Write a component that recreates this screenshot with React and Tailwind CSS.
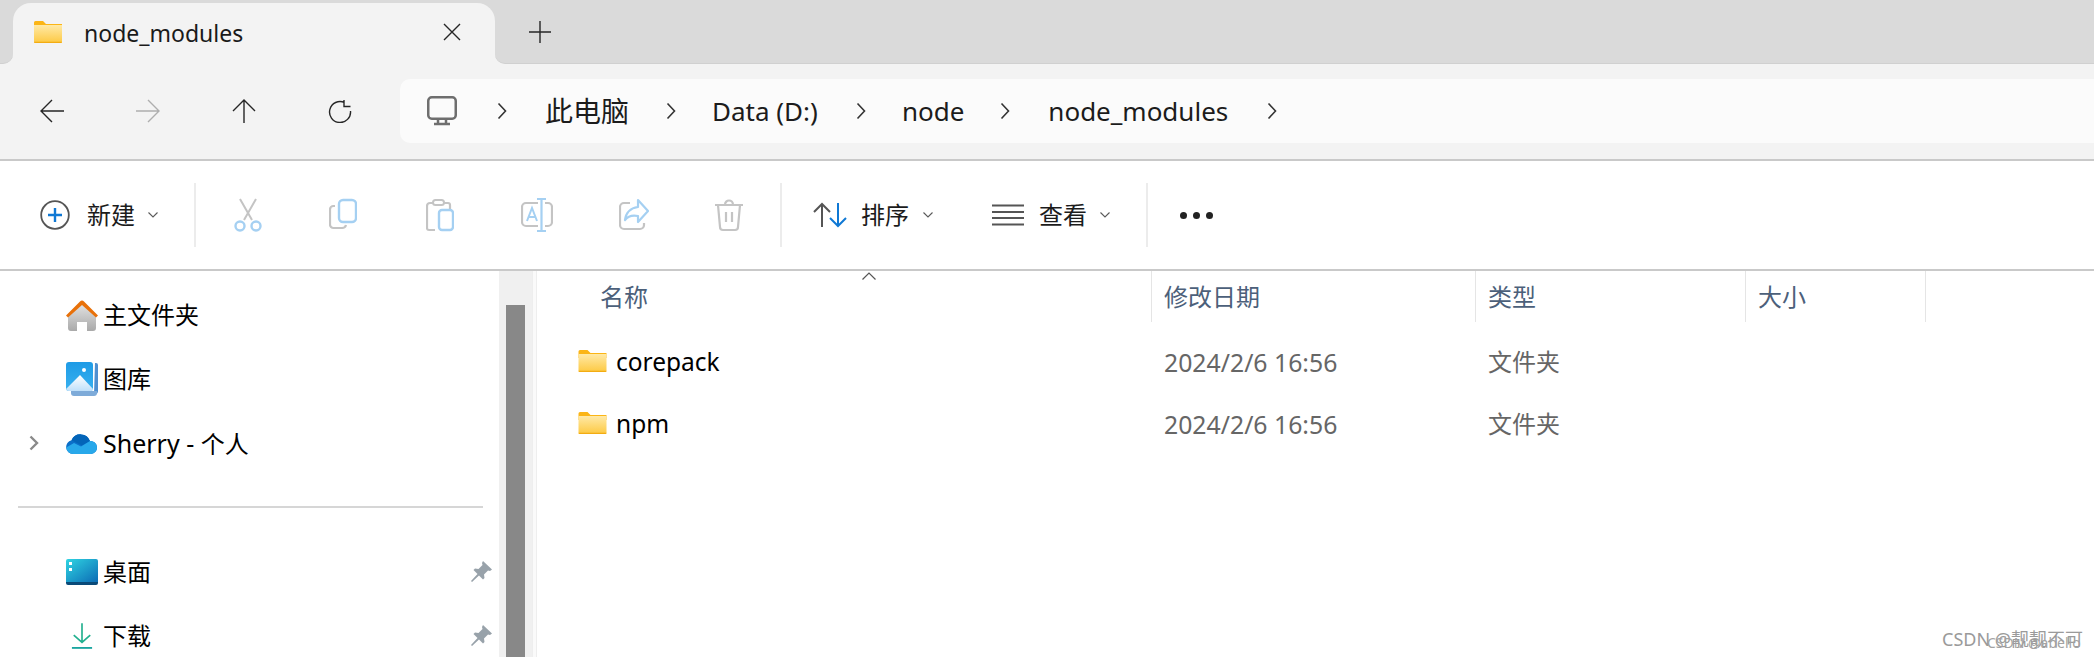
const FONT = "font-['Noto_Sans','Noto_Sans_CJK_SC',sans-serif]";

function FolderIcon({ className }) {
  return (
    <svg viewBox="0 0 28 22" className={className}>
      <defs>
        <linearGradient id="folderFill" x1="0" y1="0" x2="0" y2="1">
          <stop offset="0" stopColor="#ffe9a6" />
          <stop offset="1" stopColor="#fdc942" />
        </linearGradient>
      </defs>
      <path d="M0 1.5A1.5 1.5 0 0 1 1.5 0H9l3 3h16v5H0z" fill="#fbb516" />
      <path d="M0 4h28v16.5a1.5 1.5 0 0 1-1.5 1.5h-25A1.5 1.5 0 0 1 0 20.5z" fill="url(#folderFill)" />
      <path d="M0 20.8h28v.2a1 1 0 0 1-1 1H1a1 1 0 0 1-1-1z" fill="#f3ac12" />
    </svg>
  );
}

function NavIcon({ d, color = "#262626" }) {
  return (
    <svg viewBox="0 0 24 24" fill="none" stroke={color} strokeWidth="1.4" className="h-6 w-6">
      <path d={d} />
    </svg>
  );
}

function Chevron({ className = "" }) {
  return (
    <svg viewBox="0 0 10 18" fill="none" stroke="#333" strokeWidth="1.6" className={`h-[18px] w-[10px] shrink-0 ${className}`}>
      <path d="M1.5 1.5 8.5 9l-7 7.500" />
    </svg>
  );
}

function Caret() {
  return (
    <svg viewBox="0 0 10 6" fill="none" stroke="#5a5a5a" strokeWidth="1.1" className="h-[6px] w-[10px]">
      <path d="M.5.5 5 5 9.500.5" />
    </svg>
  );
}

function Divider() {
  return <div className="h-[64px] w-[2px] shrink-0 bg-[#ececec]" />;
}

const GRAY = "#c4c4c4";
const BLUE = "#a5d0f2";

function GhostIcon({ w, children }) {
  return (
    <svg viewBox={`0 0 ${w} 34`} fill="none" strokeWidth="2" style={{ width: w }} className="h-[34px] shrink-0">
      {children}
    </svg>
  );
}

function Pin() {
  return (
    <svg viewBox="0 0 22 22" className="h-[22px] w-[22px]" fill="#98a2aa">
      <path d="M13 0l9 8.500-2 1.500-2-.5-4 4 .5 3.500-1.500 1.500-4-4-7 6.500-1-1 6.500-7-4-4L5 7.500l3.500.5 4-4L12 2z" />
    </svg>
  );
}

function NavRow({ icon, label, chevron, pin }) {
  return (
    <div className="flex h-[64px] items-center">
      <div className="flex w-[66px] shrink-0 justify-start pl-[29px]">
        {chevron && (
          <svg viewBox="0 0 10 16" fill="none" stroke="#8a8a8a" strokeWidth="2.4" className="h-[16px] w-[10px]">
            <path d="M1.500 1.500 8 8l-6.500 6.500" />
          </svg>
        )}
      </div>
      <div className="flex w-[32px] shrink-0 items-center justify-center">{icon}</div>
      <span className="ml-[5px] text-[24px] leading-none text-black">{label}</span>
      {pin && <div className="ml-auto mr-[7px]"><Pin /></div>}
    </div>
  );
}

const COLS = "grid grid-cols-[615px_324px_270px_180px]";

function FileRow({ name }) {
  return (
    <div className={`${COLS} h-[62px] items-center`}>
      <div className="flex items-center pl-[41px]">
        <FolderIcon className="mb-[2px] h-[22px] w-[29px] shrink-0" />
        <span className="ml-[9px] text-[24.500px] leading-none text-black">{name}</span>
      </div>
      <span className="pl-[12px] text-[24.800px] leading-none text-[#666]">2024/2/6 16:56</span>
      <span className="pl-[12px] text-[24px] leading-none text-[#666]">文件夹</span>
      <span />
    </div>
  );
}

function HeaderCell({ children, className = "" }) {
  return (
    <div className={`flex h-[51px] items-center border-r border-[#e5e5e5] pl-[12px] text-[24px] leading-none text-[#4c607a] ${className}`}>
      {children}
    </div>
  );
}

export default function App() {
  return (
    <div className={`relative flex h-[657px] w-[2094px] flex-col overflow-hidden bg-white ${FONT}`}>
      {/* tab strip */}
      <div className="flex h-[64px] shrink-0 bg-[#f3f3f3]">
        <div className="w-[13px] rounded-br-[10px] border-b border-[#d0d0d0] bg-[#dadada]" />
        <div className="w-[482px] bg-[#dadada] pt-[3px]">
          <div className="flex h-full items-center rounded-t-[18px] bg-[#f3f3f3] pl-[21px] pr-[33px]">
            <FolderIcon className="mb-[4px] h-[22px] w-[28px] shrink-0" />
            <span className="ml-[22px] text-[23px] leading-none text-[#1a1a1a]">node_modules</span>
            <svg viewBox="0 0 20 20" fill="none" stroke="#262626" strokeWidth="1.4" className="mb-[4px] ml-auto h-[20px] w-[20px]">
              <path d="M2 2l16 16M18 2 2 18" />
            </svg>
          </div>
        </div>
        <div className="flex flex-1 items-center rounded-bl-[10px] border-b border-[#d0d0d0] bg-[#dadada] pl-[34px]">
          <svg viewBox="0 0 22 22" fill="none" stroke="#262626" strokeWidth="1.4" className="h-[22px] w-[22px]">
            <path d="M11 0v22M0 11h22" />
          </svg>
        </div>
      </div>

      {/* nav + address bar */}
      <div className="flex h-[97px] shrink-0 items-center border-b-2 border-[#c9c9c9] bg-[#f3f3f3] pb-[1px]">
        <div className="flex w-[400px] shrink-0 items-center gap-[72px] pl-[40px]">
          <NavIcon d="M24 12H1M12 1 1 12l11 11" />
          <NavIcon d="M0 12h23M12 1l11 11-11 11" color="#aeaeae" />
          <NavIcon d="M12 24V1M1 12 12 1l11 11" />
          <NavIcon d="M16.500 3.500A10.500 10.500 0 1 0 22.500 12M16 1v6.500h6.500" />
        </div>
        <div className="flex h-[64px] flex-1 items-center rounded-l-[10px] bg-[#fbfbfb] pl-[27px] text-[26px] leading-none text-[#1c1c1c]">
          <svg viewBox="0 0 30 30" fill="none" className="h-[30px] w-[30px] shrink-0">
            <rect x="1.250" y="1.250" width="27.500" height="21.500" rx="3.500" stroke="#6e6e6e" strokeWidth="2.500" />
            <path d="M11 23v4M19 23v4M7 28h16" stroke="#6e6e6e" strokeWidth="2.500" />
          </svg>
          <Chevron className="ml-[40px]" />
          <span className="ml-[38px] text-[28px]">此电脑</span>
          <Chevron className="ml-[37px]" />
          <span className="ml-[36px]">Data (D:)</span>
          <Chevron className="ml-[38px]" />
          <span className="ml-[36px]">node</span>
          <Chevron className="ml-[36px]" />
          <span className="ml-[38px]">node_modules</span>
          <Chevron className="ml-[39px]" />
        </div>
      </div>

      {/* command bar */}
      <div className="flex h-[110px] shrink-0 items-center border-b-2 border-[#c9c9c9] bg-white text-[24px] leading-none text-[#1c1c1c]">
        <div className="flex w-[194px] shrink-0 items-center pl-[40px]">
          <svg viewBox="0 0 30 30" fill="none" className="h-[30px] w-[30px] shrink-0">
            <circle cx="15" cy="15" r="13.800" stroke="#555" strokeWidth="1.800" />
            <path d="M15 8v14M8 15h14" stroke="#0f78d4" strokeWidth="2.400" />
          </svg>
          <span className="ml-[17px]">新建</span>
          <span className="ml-[13px]"><Caret /></span>
        </div>
        <Divider />
        <div className="flex w-[584px] shrink-0 items-center pl-[38px]">
          <div className="w-[95px]">
            <GhostIcon w={28}>
              <path d="M6 1l12 21M22 1 10 22" stroke={GRAY} />
              <circle cx="6" cy="28" r="4.500" stroke={BLUE} strokeWidth="2.400" />
              <circle cx="22" cy="28" r="4.500" stroke={BLUE} strokeWidth="2.400" />
            </GhostIcon>
          </div>
          <div className="w-[97px]">
            <GhostIcon w={28}>
              <path d="M6 8H4.500A3.500 3.500 0 0 0 1 11.500v15A3.500 3.500 0 0 0 4.500 30H13a4 4 0 0 0 4-3" stroke={GRAY} strokeWidth="2.200" />
              <rect x="10" y="2" width="17" height="22" rx="4" stroke={BLUE} strokeWidth="2.400" />
            </GhostIcon>
          </div>
          <div className="w-[95px]">
            <GhostIcon w={28}>
              <path d="M7 5H4a3 3 0 0 0-3 3v22a2 2 0 0 0 2 2h6M18 5h4a2 2 0 0 1 2 2v4" stroke={GRAY} strokeWidth="2.200" />
              <rect x="7" y="2" width="11" height="5" rx="2.500" stroke={GRAY} strokeWidth="2" />
              <rect x="13" y="12" width="14" height="20" rx="3" stroke={BLUE} strokeWidth="2.400" />
            </GhostIcon>
          </div>
          <div className="w-[98px]">
            <GhostIcon w={32}>
              <path d="M17 5H5a4 4 0 0 0-4 4v15a4 4 0 0 0 4 4h12M24 5h3a4 4 0 0 1 4 4v15a4 4 0 0 1-4 4h-3" stroke={GRAY} strokeWidth="2.200" />
              <path d="M20.500 1v32M16 1h9M16 33h9" stroke={BLUE} strokeWidth="2.200" />
              <path d="M6 23l5-13 5 13M8 19h6" stroke={BLUE} strokeWidth="2" />
            </GhostIcon>
          </div>
          <div className="w-[95px]">
            <GhostIcon w={30}>
              <path d="M11 5H5a4 4 0 0 0-4 4v18a4 4 0 0 0 4 4h16a4 4 0 0 0 4-4v-2" stroke={GRAY} strokeWidth="2.200" />
              <path d="M19 2l10 11-10 11v-6c-5-1-10 0-13 4 1-8 6-12 13-13z" stroke={BLUE} strokeWidth="2.200" strokeLinejoin="round" />
            </GhostIcon>
          </div>
          <GhostIcon w={30}>
            <path d="M1 7h28M11 7c0-6 8-6 8 0M4 7l2 22a3 3 0 0 0 3 3h12a3 3 0 0 0 3-3l2-22M12 14v10M18 14v10" stroke={GRAY} strokeWidth="2.200" />
          </GhostIcon>
        </div>
        <Divider />
        <div className="flex w-[364px] shrink-0 items-center pl-[31px]">
          <svg viewBox="0 0 34 26" fill="none" strokeWidth="2" className="h-[26px] w-[34px] shrink-0">
            <path d="M9 25V2M1 10l8-8 8 8" stroke="#555" />
            <path d="M25 1v23M17 16l8 8 8-8" stroke="#0f78d4" />
          </svg>
          <span className="ml-[14px]">排序</span>
          <span className="ml-[14px]"><Caret /></span>
          <svg viewBox="0 0 32 22" fill="none" stroke="#555" strokeWidth="2" className="ml-[59px] h-[22px] w-[32px] shrink-0">
            <path d="M0 1.500h32M0 8h32M0 14h32M0 20.500h32" />
          </svg>
          <span className="ml-[15px]">查看</span>
          <span className="ml-[13px]"><Caret /></span>
        </div>
        <Divider />
        <div className="flex items-center gap-[6px] pl-[32px]">
          <div className="h-[7px] w-[7px] rounded-full bg-[#222]" />
          <div className="h-[7px] w-[7px] rounded-full bg-[#222]" />
          <div className="h-[7px] w-[7px] rounded-full bg-[#222]" />
        </div>
      </div>

      {/* body */}
      <div className="flex min-h-0 flex-1">
        <div className="flex w-[532px] shrink-0">
          <div className="w-[499px] shrink-0 pt-[12px]">
            <NavRow
              label="主文件夹"
              icon={
                <svg viewBox="0 0 32 31" className="h-[31px] w-[32px]">
                  <defs>
                    <linearGradient id="homeBody" x1="0" y1="0" x2="0" y2="1">
                      <stop offset="0" stopColor="#e2e2e2" />
                      <stop offset="1" stopColor="#a9a9a9" />
                    </linearGradient>
                  </defs>
                  <path d="M2 15 16 4l14 11v13a3 3 0 0 1-3 3h-6v-9h-10v9H5a3 3 0 0 1-3-3z" fill="url(#homeBody)" />
                  <path d="M0 15.500 14 1.500a3 3 0 0 1 4 0l14 14-2 2L16 5 2 17.500z" fill="#e8710a" />
                </svg>
              }
            />
            <NavRow
              label="图库"
              icon={
                <svg viewBox="0 0 32 34" className="h-[34px] w-[32px]">
                  <defs>
                    <linearGradient id="galSky" x1="0" y1="0" x2="0" y2="1">
                      <stop offset="0" stopColor="#1e9be6" />
                      <stop offset="1" stopColor="#39b1ef" />
                    </linearGradient>
                    <linearGradient id="galHill" x1="0" y1="0" x2="0" y2="1">
                      <stop offset="0" stopColor="#ffffff" />
                      <stop offset="1" stopColor="#bfe0fa" />
                    </linearGradient>
                  </defs>
                  <path d="M29 1h1a2 2 0 0 1 2 2v26a3 3 0 0 1-3 3h-1z" fill="#4f8fd0" />
                  <path d="M5 29h26v2a3 3 0 0 1-3 3H8a3 3 0 0 1-3-3z" fill="#7eabd9" />
                  <rect width="27" height="29" rx="3" fill="url(#galSky)" />
                  <path d="M0 27 14 13l13 14a2 2 0 0 1-2 2H3a3 3 0 0 1-3-2z" fill="url(#galHill)" />
                  <circle cx="18" cy="8" r="2" fill="#fff" />
                </svg>
              }
            />
            <NavRow
              chevron
              label={<><span className="text-[25px]">Sherry - </span>个人</>}
              icon={
                <svg viewBox="0 0 32 22" className="h-[22px] w-[32px]">
                  <path d="M7 22a7 7 0 0 1-1.500-13.800A10 10 0 0 1 24 9a6.500 6.500 0 0 1 1 13z" fill="#0b6fc9" />
                  <path d="M5.500 8.200A10 10 0 0 1 24 9l-8 4.500z" fill="#0364b8" />
                  <path d="M.2 15.500 8 11l7 3.500L24 9a6.500 6.500 0 0 1 1 13H7a7 7 0 0 1-6.800-6.500z" fill="#28a8ea" />
                </svg>
              }
            />
            <div className="ml-[18px] mr-[16px] mt-[31px] h-[2px] bg-[#d6d6d6]" />
            <div className="pt-[32px]">
              <NavRow
                pin
                label="桌面"
                icon={
                  <svg viewBox="0 0 32 26" className="h-[26px] w-[32px]">
                    <defs>
                      <linearGradient id="deskFill" x1="0" y1="0" x2="1" y2="1">
                        <stop offset="0" stopColor="#2fd4e2" />
                        <stop offset="1" stopColor="#0c6cb5" />
                      </linearGradient>
                    </defs>
                    <path d="M0 2a2 2 0 0 1 2-2h28a2 2 0 0 1 2 2v21H0z" fill="url(#deskFill)" />
                    <path d="M0 23h32v1a2 2 0 0 1-2 2H2a2 2 0 0 1-2-2z" fill="#0a4a78" />
                    <rect x="3" y="3" width="3" height="3" fill="#fff" />
                    <rect x="3" y="9" width="3" height="3" fill="#fff" />
                  </svg>
                }
              />
              <NavRow
                pin
                label="下载"
                icon={
                  <svg viewBox="0 0 24 28" fill="none" stroke="#22b08f" strokeWidth="1.800" className="h-[28px] w-[22px]">
                    <path d="M12 0v21M3 13l9 8 9-8" />
                    <path d="M1 27h22" stroke="#1aa5a0" strokeWidth="2" />
                  </svg>
                }
              />
            </div>
          </div>
          <div className="flex w-[33px] shrink-0 justify-center bg-[#f0f0f0] pt-[34px]">
            <div className="h-full w-[19px] bg-[#888]" />
          </div>
        </div>
        <div className="w-[5px] shrink-0 border-x border-[#eeeeee] bg-[#fafafa]" />
        <div className="relative flex-1">
          <svg viewBox="0 0 14 8" fill="none" stroke="#555" strokeWidth="1.200" className="absolute left-[325px] top-[1px] h-[8px] w-[14px]">
            <path d="M.5 7.500 7 1l6.500 6.500" />
          </svg>
          <div className={COLS}>
            <HeaderCell className="pl-[63px]">名称</HeaderCell>
            <HeaderCell>修改日期</HeaderCell>
            <HeaderCell>类型</HeaderCell>
            <HeaderCell>大小</HeaderCell>
          </div>
          <div className="pt-[9px]">
            <FileRow name="corepack" />
            <FileRow name="npm" />
          </div>
        </div>
      </div>

      {/* watermark */}
      <div className="absolute left-[1942px] top-[628px] text-[18px] leading-[22px] whitespace-nowrap text-[#9a9a9a]">CSDN @靓靓不可</div>
      <div className="absolute left-[1987px] top-[634px] text-[14px] leading-[18px] whitespace-nowrap text-[#a3a3a3]">CSDN @abello</div>
    </div>
  );
}
